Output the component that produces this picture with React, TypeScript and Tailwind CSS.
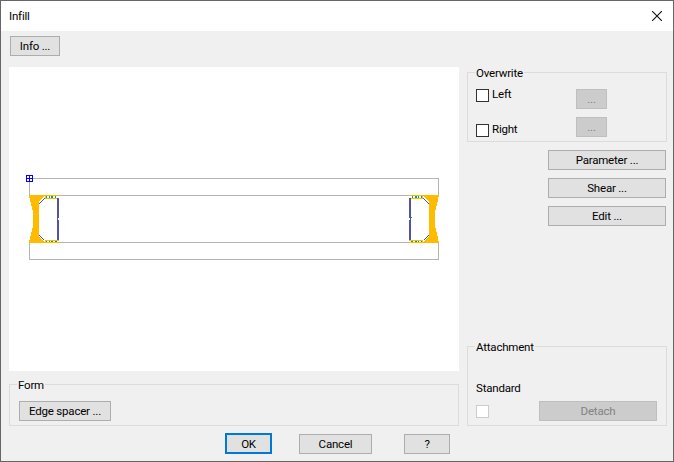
import React from "react";

const Btn = ({ w, label, cls = "" }: { w: string; label: string; cls?: string }) => (
  <button className={`${w} h-[20px] shrink-0 box-border border border-[#adadad] bg-[#e1e1e1] text-[11.5px] tracking-[-0.2px] leading-[16px] text-black flex items-center justify-center ${cls}`}>
    {label}
  </button>
);

const Off = ({ w, label, cls = "" }: { w: string; label: string; cls?: string }) => (
  <button className={`${w} h-[20px] shrink-0 box-border border border-[#bfbfbf] bg-[#cccccc] text-[11.5px] tracking-[-0.2px] leading-[16px] text-[#838383] flex items-center justify-center ${cls}`}>
    {label}
  </button>
);

const Check = ({ off = false }: { off?: boolean }) => (
  <span className={`block w-[13px] h-[13px] box-border shrink-0 bg-white border ${off ? "border-[#cccccc]" : "border-[#333333]"}`} />
);

const Legend = ({ text }: { text: string }) => (
  <span className="absolute left-[7px] top-[-8px] bg-[#f0f0f0] px-px text-[11.5px] tracking-[-0.2px] leading-[16px] text-black">{text}</span>
);

const End = () => (
  <g shapeRendering="crispEdges">
    <polygon points="29,195 45,195 39,202 39,236 45,243 29,243 30,238 31,234 32,230 33,226 33,212 32,208 31,204 30,200" fill="#ffbb00" />
    <rect x="45" y="195" width="14" height="1" fill="#ffbb00" />
    <rect x="45" y="198" width="14" height="1" fill="#ffbb00" />
    <rect x="45" y="240" width="14" height="1" fill="#ffbb00" />
    <rect x="45" y="242" width="14" height="1" fill="#ffbb00" />
    <rect x="45" y="196" width="1" height="2" fill="#ffbb00" />
    <rect x="45" y="241" width="1" height="1" fill="#ffbb00" />
    <rect x="46" y="196" width="1" height="2" fill="#12a150" />
    <rect x="49" y="196" width="1" height="2" fill="#12a150" />
    <rect x="51" y="196" width="2" height="2" fill="#12a150" />
    <rect x="55" y="196" width="1" height="2" fill="#12a150" />
    <rect x="46" y="241" width="1" height="1" fill="#12a150" />
    <rect x="49" y="241" width="1" height="1" fill="#12a150" />
    <rect x="51" y="241" width="2" height="1" fill="#12a150" />
    <rect x="55" y="241" width="2" height="1" fill="#12a150" />
    <rect x="57" y="198" width="1" height="42" fill="#5353a6" />
    <rect x="58" y="198" width="1" height="20" fill="#5353a6" />
    <rect x="58" y="220" width="1" height="20" fill="#5353a6" />
    <rect x="44" y="198" width="1" height="1" fill="#5353a6" />
    <rect x="43" y="199" width="1" height="1" fill="#5353a6" />
    <rect x="42" y="200" width="1" height="1" fill="#5353a6" />
    <rect x="41" y="201" width="1" height="1" fill="#5353a6" />
    <rect x="40" y="202" width="1" height="1" fill="#5353a6" />
    <rect x="39" y="203" width="1" height="1" fill="#5353a6" />
    <rect x="39" y="235" width="1" height="1" fill="#5353a6" />
    <rect x="40" y="236" width="1" height="1" fill="#5353a6" />
    <rect x="41" y="237" width="1" height="1" fill="#5353a6" />
    <rect x="42" y="238" width="1" height="1" fill="#5353a6" />
    <rect x="43" y="239" width="1" height="1" fill="#5353a6" />
  </g>
);

export default function App() {
  return (
    <div
      className="w-[674px] h-[462px] box-border border border-[#666666] bg-[#f0f0f0] flex flex-col overflow-hidden text-black"
      style={{ fontFamily: 'Roboto, "Noto Sans", sans-serif' }}
    >
      <div className="h-[30px] shrink-0 bg-white pl-[8px] pr-[10px] flex items-center justify-between">
        <span className="text-[11.5px] tracking-[-0.2px] leading-[16px]">Infill</span>
        <svg width="10" height="10" viewBox="0 0 10 10" className="mr-px" fill="none" stroke="#111" strokeWidth="1.1">
          <path d="M0 0L10 10M10 0L0 10" />
        </svg>
      </div>

      <div className="flex flex-col pl-[8px] pt-[5px]">
        <Btn w="w-[50px]" label="Info ..." cls="ml-px" />

        <div className="flex gap-[8px] mt-[11px] h-[359px]">
          <div className="w-[450px] flex flex-col justify-between">
            <div className="h-[304px] bg-white">
              <svg width="450" height="304" viewBox="9 67 450 304" className="block">
                <g shapeRendering="crispEdges" fill="none" stroke="#b4b4b4" strokeWidth="1">
                  <path d="M29.5 195V178.5H438.5V195" />
                  <path d="M29.5 243V259.5H438.5V243" />
                  <path d="M45 195.5H423M45 242.5H423" />
                </g>
                <End />
                <g transform="translate(468 0) scale(-1 1)">
                  <End />
                </g>
                <rect x="411" y="217" width="1" height="1" fill="#12a150" shapeRendering="crispEdges" />
                <g shapeRendering="crispEdges" fill="none" stroke="#0000ff" strokeWidth="1">
                  <rect x="26.5" y="175.5" width="6" height="6" fill="#ffffff" />
                  <path d="M29.5 175.5V181.5M26.5 178.5H32.5" />
                </g>
              </svg>
            </div>
            <div className="relative h-[42px] box-border border border-[#dcdcdc] pl-[9px] pt-[16px]">
              <Legend text="Form" />
              <Btn w="w-[92px]" label="Edge spacer ..." />
            </div>
          </div>

          <div className="w-[200px] flex flex-col">
            <div className="relative mt-[5px] h-[70px] box-border border border-[#dcdcdc] pl-[8px] pt-[15px]">
              <Legend text="Overwrite" />
              <div className="flex items-start">
                <label className="w-[100px] flex items-center gap-[3px] text-[11.5px] tracking-[-0.2px] leading-[16px]">
                  <Check />
                  <span className="-mt-[2px]">Left</span>
                </label>
                <Off w="w-[31px]" label="..." cls="mt-px" />
              </div>
              <div className="flex items-start mt-[8px]">
                <label className="w-[100px] mt-[6px] flex items-center gap-[3px] text-[11.5px] tracking-[-0.2px] leading-[16px]">
                  <Check />
                  <span className="-mt-[2px]">Right</span>
                </label>
                <Off w="w-[31px]" label="..." />
              </div>
            </div>

            <div className="flex flex-col items-end gap-[8px] mt-[8px] pr-px">
              <Btn w="w-[118px]" label="Parameter ..." />
              <Btn w="w-[118px]" label="Shear ..." />
              <Btn w="w-[118px]" label="Edit ..." />
            </div>

            <div className="relative mt-auto h-[80px] box-border border border-[#dcdcdc] pl-[8px] pt-[33px]">
              <Legend text="Attachment" />
              <div className="text-[11.5px] tracking-[-0.2px] leading-[16px]">Standard</div>
              <div className="flex items-center mt-[5px]">
                <span className="w-[63px] block">
                  <Check off />
                </span>
                <Off w="w-[118px]" label="Detach" />
              </div>
            </div>
          </div>
        </div>

        <div className="flex mt-[8px] ml-[216px]">
          <button className="w-[47px] h-[21px] -mt-px box-border border-2 border-[#0078d7] bg-[#e1e1e1] text-[11.5px] tracking-[-0.2px] leading-[16px]">OK</button>
          <Btn w="w-[73px]" label="Cancel" cls="ml-[27px]" />
          <Btn w="w-[46px]" label="?" cls="ml-[32px]" />
        </div>
      </div>
    </div>
  );
}
